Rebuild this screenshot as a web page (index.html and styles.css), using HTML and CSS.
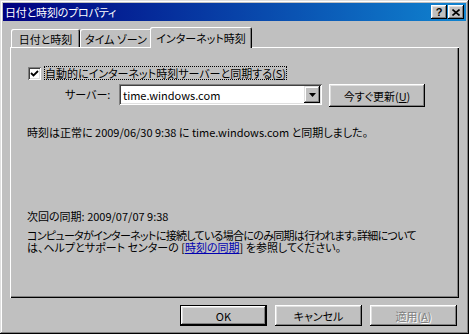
FILE: index.html
```html
<!DOCTYPE html>
<html lang="ja">
<head>
  <meta charset="UTF-8">
  <title>日付と時刻のプロパティ</title>
  <link rel="stylesheet" href="styles.css">
</head>
<body>

  <div class="window">

    <div class="titlebar">
      <span class="title">日付と時刻のプロパティ</span>
      <div class="title-buttons">
        <span class="title-btn help">?</span>
        <span class="title-btn close">
          <svg width="8" height="7" viewBox="0 0 8 7"><path d="M0.5 0.5 L7.5 6.5 M7.5 0.5 L0.5 6.5" stroke="#000" stroke-width="1.6" fill="none"/></svg>
        </span>
      </div>
    </div>

    <div class="tabs">
      <div class="tab tab-date">日付と時刻</div>
      <div class="tab tab-zone">タイム ゾーン</div>
      <div class="tab active">インターネット時刻</div>
    </div>

    <div class="panel">
      <div class="check-row">
        <span class="checkbox">
          <svg width="9" height="9" viewBox="0 0 9 9"><polyline points="1,4 3.5,6.5 8,2" stroke="#000" stroke-width="1.8" fill="none"/></svg>
        </span>
        <span class="check-label">自動的にインターネット時刻サーバーと同期する(<u>S</u>)</span>
      </div>

      <div class="server-row">
        <span class="server-label">サーバー:</span>
        <div class="combo">
          <span class="combo-text">time.windows.com</span>
          <span class="combo-arrow">
            <svg width="7" height="4" viewBox="0 0 7 4"><polygon points="0,0 7,0 3.5,4" fill="#000"/></svg>
          </span>
        </div>
        <span class="button update">今すぐ更新(<u>U</u>)</span>
      </div>

      <p class="status">時刻は正常に 2009/06/30 9:38 に time.windows.com と同期しました。</p>

      <p class="next">次回の同期: 2009/07/07 9:38</p>
      <div class="desc">
        <div class="desc-line tight">コンピュータがインターネットに接続している場合にのみ同期は行われます。詳細について</div>
        <div class="desc-line">は、ヘルプとサポート センターの [<a class="link">時刻の同期</a>] を参照してください。</div>
      </div>
    </div>

    <div class="footer">
      <span class="button default">OK</span>
      <span class="button">キャンセル</span>
      <span class="button disabled">適用(<u>A</u>)</span>
    </div>

  </div>

</body>
</html>
```

FILE: styles.css
```css
body {
  margin: 0;
  padding: 0;
  background-color: #c0c0c0;
  font-family: "Noto Sans CJK JP", sans-serif;
  font-size: 11px;
  line-height: 12px;
  font-feature-settings: "palt" 1;
  color: #000;
}

.window {
  width: 469px;
  height: 334px;
  box-sizing: border-box;
  padding: 3px 3px 5px 3px;
  background-color: #c0c0c0;
  box-shadow: inset -1px -1px #000, inset 1px 1px #dfdfdf, inset -2px -2px #808080, inset 2px 2px #fff;
  display: flex;
  flex-direction: column;
}

.titlebar {
  height: 18px;
  display: flex;
  align-items: center;
  justify-content: space-between;
  padding: 0 2px 0 2px;
  background: linear-gradient(to right, #000080, #1084d0);
}

.title {
  color: white;
  font-size: 11px;
  letter-spacing: -0.2px;
}

.title-buttons {
  display: flex;
  gap: 1px;
}

.title-btn {
  width: 16px;
  height: 14px;
  display: flex;
  align-items: center;
  justify-content: center;
  background-color: #c0c0c0;
  box-shadow: inset -1px -1px #000, inset 1px 1px #fff, inset -2px -2px #808080, inset 2px 2px #dfdfdf;
  box-sizing: border-box;
}

.title-btn.help {
  font-family: "Liberation Sans", sans-serif;
  font-weight: bold;
  font-size: 11px;
  padding-bottom: 1px;
}

.tabs {
  display: flex;
  align-items: flex-end;
  height: 21px;
  margin-top: 6px;
  margin-bottom: -1px;
  padding-left: 8px;
}

.tab {
  height: 18px;
  box-sizing: border-box;
  margin-bottom: 1px;
  padding-top: 4px;
  text-align: center;
  border-radius: 2px 2px 0 0;
  background-color: #c0c0c0;
  box-shadow: inset 1px 1px #fff, inset -1px 0 #000, inset -2px 0 #808080;
}

.tab-date {
  width: 69px;
}

.tab-zone {
  width: 72px;
}

.tab.active {
  position: relative;
  z-index: 1;
  width: 102px;
  height: 21px;
  margin-left: -2px;
  margin-bottom: 0;
  padding-top: 5px;
}

.panel {
  width: 449px;
  height: 251px;
  box-sizing: border-box;
  margin-left: 7px;
  padding-left: 17px;
  display: flex;
  flex-direction: column;
  box-shadow: inset 1px 1px #fff, inset -1px -1px #000, inset -2px -2px #808080;
}

.check-row {
  display: flex;
  align-items: center;
  height: 14px;
  margin-top: 19px;
  margin-left: 1px;
}

.checkbox {
  width: 13px;
  height: 13px;
  box-sizing: border-box;
  display: flex;
  align-items: center;
  justify-content: center;
  background-color: white;
  box-shadow: inset 1px 1px #808080, inset -1px -1px #fff, inset 2px 2px #404040, inset -2px -2px #dfdfdf;
}

.check-label {
  margin-left: 3px;
  padding: 1px 1px 0 1px;
  outline: 1px dotted #000;
  outline-offset: -1px;
  height: 14px;
  box-sizing: border-box;
}

.server-row {
  display: flex;
  align-items: flex-start;
  margin-top: 4px;
  height: 23px;
}

.server-label {
  width: 54px;
  margin-left: 38px;
  margin-top: 4px;
}

.combo {
  width: 203px;
  height: 21px;
  box-sizing: border-box;
  padding: 2px;
  display: flex;
  align-items: center;
  justify-content: space-between;
  background-color: white;
  box-shadow: inset 1px 1px #808080, inset -1px -1px #fff, inset 2px 2px #404040, inset -2px -2px #dfdfdf;
}

.combo-text {
  padding-left: 2px;
}

.combo-arrow {
  width: 16px;
  height: 17px;
  box-sizing: border-box;
  display: flex;
  align-items: center;
  justify-content: center;
  background-color: #c0c0c0;
  box-shadow: inset -1px -1px #000, inset 1px 1px #dfdfdf, inset -2px -2px #808080, inset 2px 2px #fff;
}

.button {
  height: 21px;
  width: 87px;
  box-sizing: border-box;
  display: flex;
  align-items: center;
  justify-content: center;
  background-color: #c0c0c0;
  box-shadow: inset -1px -1px #000, inset 1px 1px #fff, inset -2px -2px #808080, inset 2px 2px #dfdfdf;
}

.button.update {
  width: 96px;
  height: 23px;
  margin-left: 7px;
}

.button.default {
  border: 1px solid #000;
}

.button.disabled {
  color: #808080;
  text-shadow: 1px 1px #fff;
}

.status {
  margin: 19px 0 0 0;
}

.next {
  margin: 72px 0 0 0;
}

.desc {
  margin-top: 7px;
  white-space: nowrap;
}

.desc-line {
  height: 12px;
}

.tight {
  letter-spacing: -0.7px;
}

.link {
  color: #0000b0;
  text-decoration: underline;
}

.footer {
  display: flex;
  justify-content: flex-end;
  gap: 8px;
  margin-top: 7px;
  padding-right: 9px;
}
```
